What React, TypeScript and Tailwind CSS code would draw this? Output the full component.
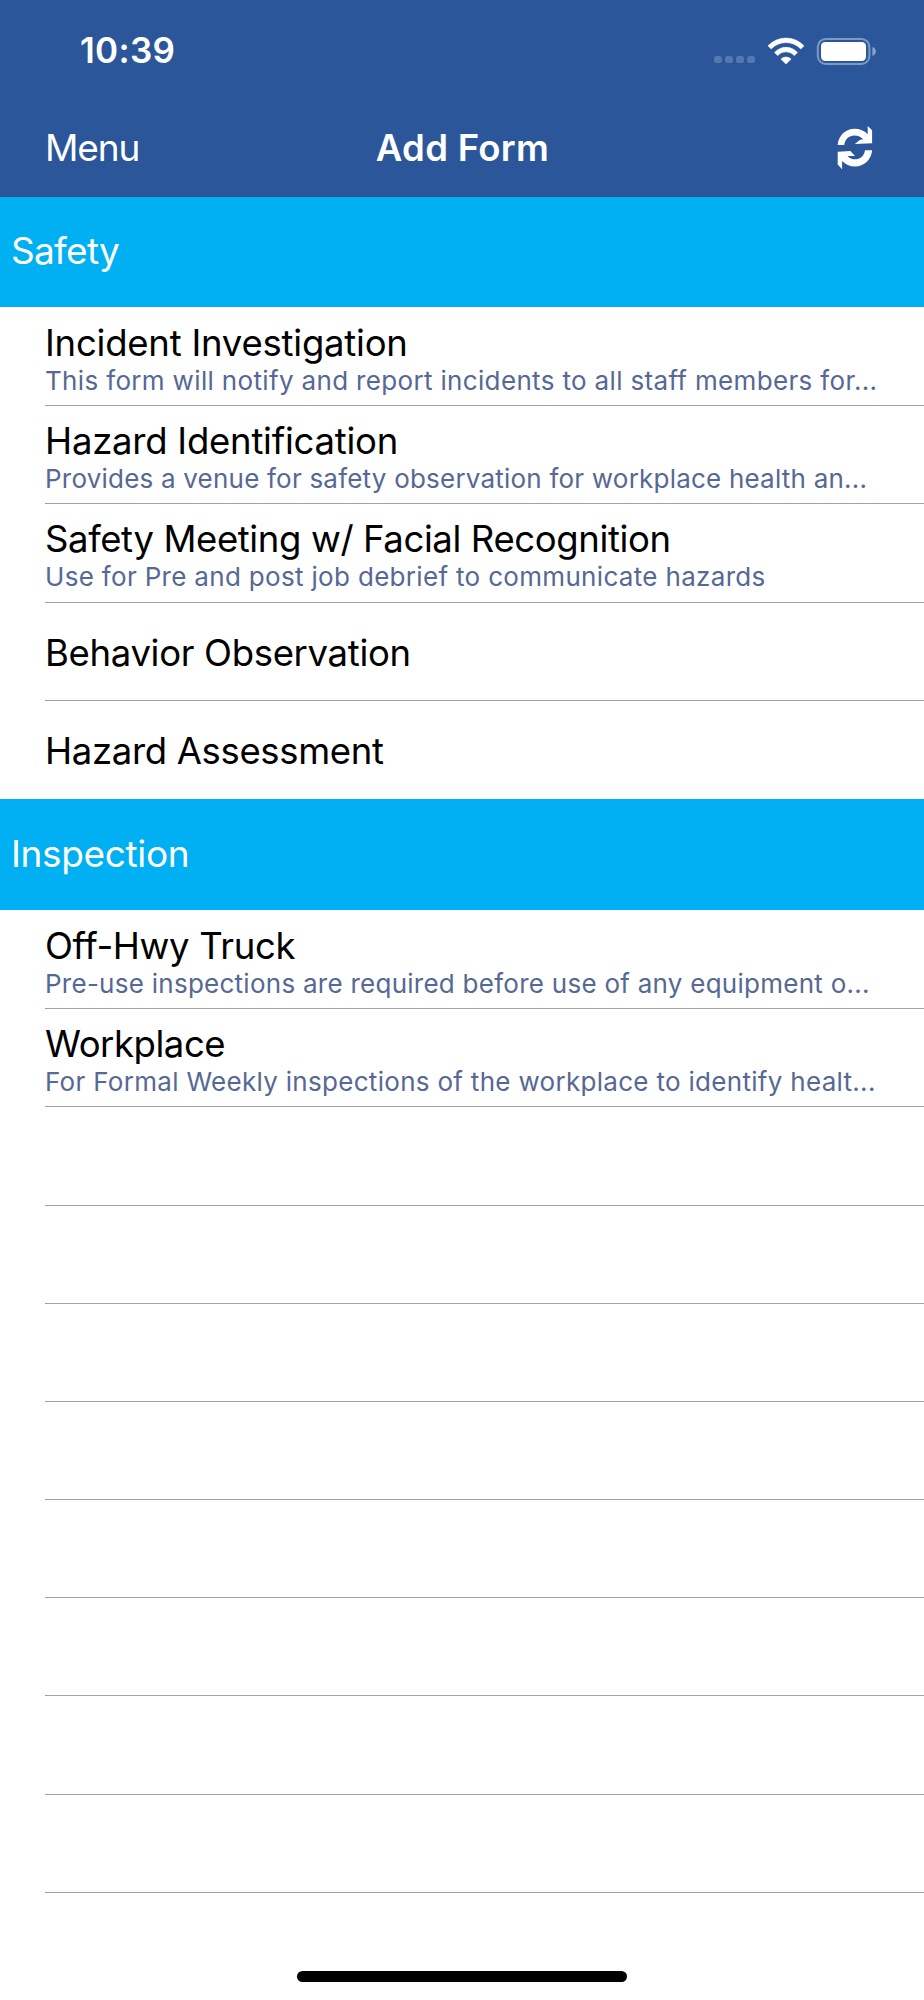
import React from 'react';

type FormItem = {
  title: string;
  titleClass: string;
  description?: string;
  descriptionClass?: string;
};

type FormSection = {
  name: string;
  headerClass: string;
  forms: FormItem[];
  emptyRows: number;
};

const sections: FormSection[] = [
  {
    name: 'Safety',
    headerClass: 'h-[110px] tracking-[-0.7px]',
    emptyRows: 0,
    forms: [
      {
        title: 'Incident Investigation',
        titleClass: 'tracking-[-0.22px]',
        description: 'This form will notify and report incidents to all staff members for...',
        descriptionClass: 'tracking-[0.34px]',
      },
      {
        title: 'Hazard Identification',
        titleClass: 'tracking-[-0.24px]',
        description: 'Provides a venue for safety observation for workplace health an...',
        descriptionClass: 'tracking-[0.21px]',
      },
      {
        title: 'Safety Meeting w/ Facial Recognition',
        titleClass: 'tracking-[-0.38px]',
        description: 'Use for Pre and post job debrief to communicate hazards',
        descriptionClass: 'tracking-[0.32px]',
      },
      { title: 'Behavior Observation', titleClass: 'tracking-[-0.32px]' },
      { title: 'Hazard Assessment', titleClass: 'tracking-[-0.335px]' },
    ],
  },
  {
    name: 'Inspection',
    headerClass: 'h-[111px] tracking-[-0.35px]',
    emptyRows: 8,
    forms: [
      {
        title: 'Off-Hwy Truck',
        titleClass: 'tracking-[-0.36px]',
        description: 'Pre-use inspections are required before use of any equipment o...',
        descriptionClass: 'tracking-[0.26px]',
      },
      {
        title: 'Workplace',
        titleClass: 'tracking-[-0.45px]',
        description: 'For Formal Weekly inspections of the workplace to identify healt...',
        descriptionClass: 'tracking-[0.3px]',
      },
    ],
  },
];

const WifiIcon = () => (
  <svg width="38" height="28" viewBox="767 36 38 28" fill="white" stroke="white" strokeWidth="0.6" strokeLinejoin="round">
    <path d="M768 44.8A24.9 24.9 0 0 1 804 44.8L800.9 47.9A20.6 20.6 0 0 0 771.1 47.9Z" />
    <path d="M774.5 51.6A15.2 15.2 0 0 1 797.5 51.6L794.4 54.6A11.2 11.2 0 0 0 777.6 54.6Z" />
    <path d="M780.9 58.1A7.4 7.4 0 0 1 791.1 58.1L786 63.1Z" />
  </svg>
);

const BatteryIcon = () => (
  <svg width="60" height="28" viewBox="816 36 60 28">
    <rect x="817.8" y="37.9" width="51.6" height="25.1" rx="8" fill="none" stroke="white" strokeOpacity="0.4" strokeWidth="2" />
    <rect x="821" y="41" width="45" height="19" rx="4.2" fill="white" />
    <path d="M872.4 46V54.8C877 53.2 877 47.6 872.4 46Z" fill="white" fillOpacity="0.45" />
  </svg>
);

const SyncIcon = () => (
  <svg width="36" height="45" viewBox="837 124 36 45" fill="white">
    <path d="M837.7 144.1C838.4 134.5 845.6 127.8 854.6 127.8C859.8 127.8 864.4 129.7 867.7 133.2V125L872.1 129.2V142.2L854.8 143L859.8 139L863 138.2C860.6 135.7 857.6 134.6 854.4 134.6C849 134.6 844.9 138.2 844.3 144.1Z" />
    <path d="M872.1 149.2C871.4 158.7 864 165.4 855 165.4C849.8 165.4 845.4 163.4 842.1 159.9V168.2L837.7 163.6V150.8L850.4 150L855 154.9L847.4 154.9C849.4 157.2 852.2 158.3 855 158.3C860.2 158.3 864.2 154.9 865 149.2Z" />
  </svg>
);

const Row = ({ form, last }: { form?: FormItem; last?: boolean }) => (
  <li className="pl-[45px]">
    <div className={`h-[98.2px] whitespace-nowrap ${last ? '' : 'border-b border-[#a0a0a0]'}`}>
      {form && form.description && (
        <div className="pt-[12.8px]">
          <h3 className={`text-[36.5px] leading-[44px] ${form.titleClass}`}>{form.title}</h3>
          <p className={`text-[26px] leading-8 text-[#566894] ${form.descriptionClass}`}>{form.description}</p>
        </div>
      )}
      {form && !form.description && (
        <div className="flex h-full items-center pt-[3px]">
          <h3 className={`text-[36.5px] leading-[44px] ${form.titleClass}`}>{form.title}</h3>
        </div>
      )}
    </div>
  </li>
);

export default function App() {
  return (
    <div className="flex h-[2000px] w-[924px] flex-col overflow-hidden bg-white font-['Inter',sans-serif] text-black">
      <header className="h-[197px] shrink-0 bg-[#2b579a] text-white">
        <div className="flex h-[101px] items-center justify-between pr-12 pl-20">
          <span className="text-[35px] font-semibold tracking-[0.3px]">10:39</span>
          <div className="flex items-center">
            {/* no cellular signal */}
            <div className="mt-[18px] mr-3 flex gap-[3.3px]">
              {[0, 1, 2, 3].map((dot) => (
                <span key={dot} className="size-[7.8px] rounded-[2.5px] bg-white/20" />
              ))}
            </div>
            <WifiIcon />
            <div className="ml-[11px]">
              <BatteryIcon />
            </div>
          </div>
        </div>
        <nav className="grid h-[93px] grid-cols-[1fr_auto_1fr] items-center pr-[50px] pl-[51px]">
          <span className="-ml-1.5 text-[37px] tracking-[-1.1px]">Menu</span>
          <h1 className="pt-0.5 text-center text-[36.5px] font-semibold tracking-[0.3px] whitespace-nowrap">Add Form</h1>
          <button className="mr-px justify-self-end">
            <SyncIcon />
          </button>
        </nav>
      </header>

      <main className="grow">
        {sections.map((section, index) => (
          <section key={section.name}>
            <h2 className={`flex items-center bg-[#00b0f3] pb-0.5 pl-[11px] text-[37px] text-white ${section.headerClass}`}>
              {section.name}
            </h2>
            <ul className="pt-px">
              {section.forms.map((form, i) => (
                <Row key={form.title} form={form} last={index === 0 && i === section.forms.length - 1} />
              ))}
              {Array.from({ length: section.emptyRows }, (_, i) => (
                <Row key={i} />
              ))}
            </ul>
          </section>
        ))}
      </main>

      <footer className="flex shrink-0 justify-center pb-[18px]">
        <div className="h-[11px] w-[330px] rounded-full bg-black" />
      </footer>
    </div>
  );
}
